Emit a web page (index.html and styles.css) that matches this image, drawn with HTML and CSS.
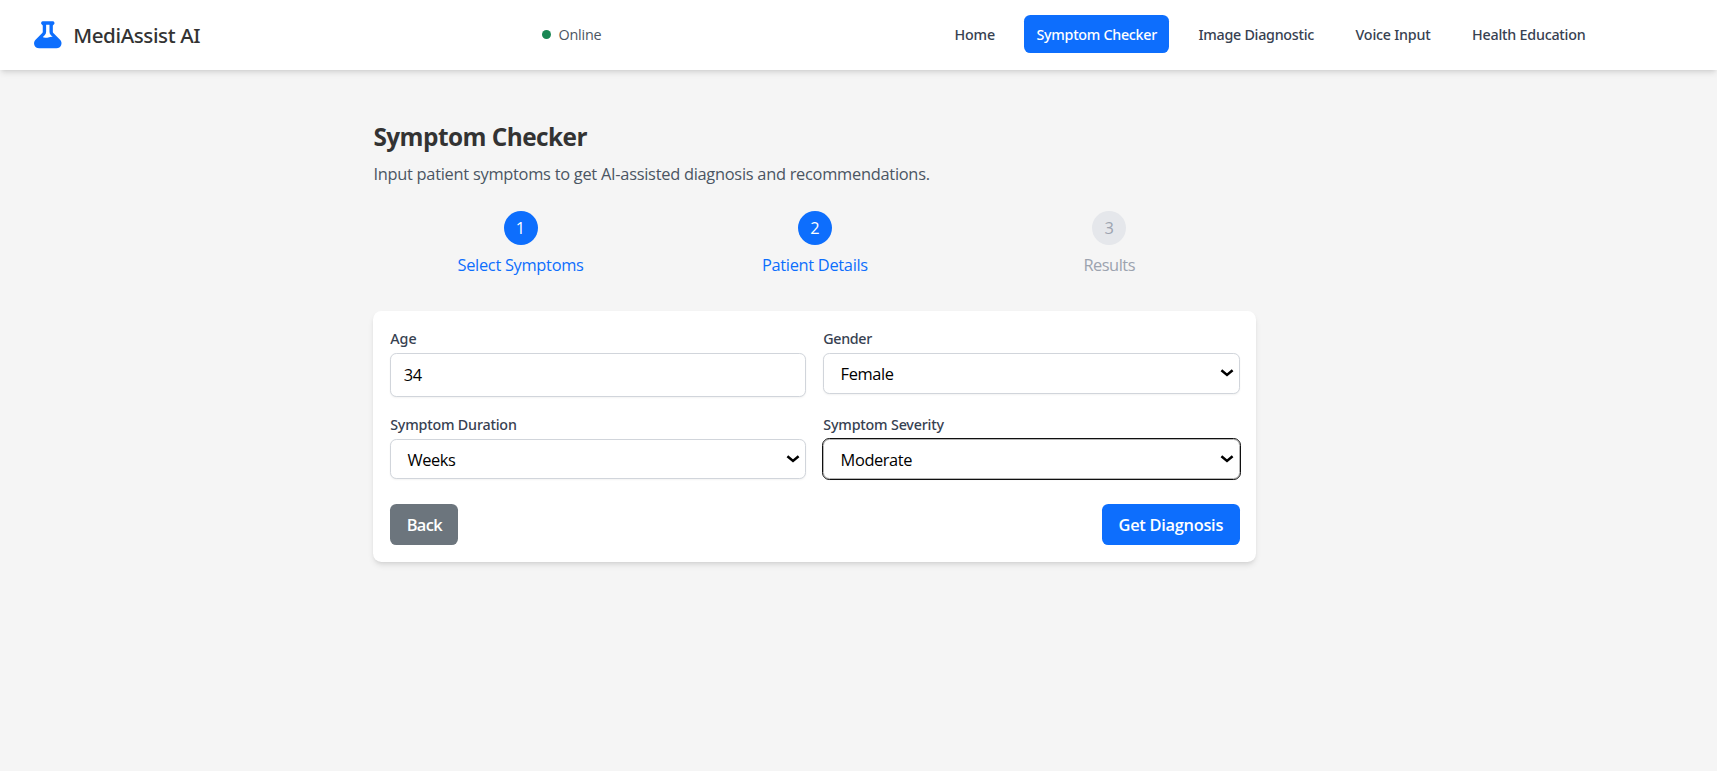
FILE: index.html
```html
<!DOCTYPE html>
<html lang="en">
<head>
<meta charset="utf-8">
<title>MediAssist AI - Symptom Checker</title>
<link rel="stylesheet" href="styles.css">
</head>
<body>
<header class="topbar">
  <div class="brand">
    <svg class="brand-icon" viewBox="0 0 20 20" fill="currentColor"><path fill-rule="evenodd" clip-rule="evenodd" d="M7 2a1 1 0 00-.707 1.707L7 4.414v3.758a1 1 0 01-.293.707l-4 4C.817 14.769 2.156 18 4.828 18h10.343c2.673 0 4.012-3.231 2.122-5.121l-4-4A1 1 0 0113 8.172V4.414l.707-.707A1 1 0 0013 2H7zm2 6.172V4h2v4.172a3 3 0 00.879 2.12l1.027 1.028a4 4 0 00-2.171.102l-.47.156a4 4 0 01-2.53 0l-.563-.187a1.993 1.993 0 00-.114-.035l1.063-1.063A3 3 0 009 8.172z"/></svg>
    <span class="brand-name">MediAssist AI</span>
  </div>
  <div class="status"><span class="status-dot"></span><span class="status-text">Online</span></div>
  <nav class="nav">
    <a class="nav-link home">Home</a>
    <a class="nav-link active">Symptom Checker</a>
    <a class="nav-link image">Image Diagnostic</a>
    <a class="nav-link">Voice Input</a>
    <a class="nav-link">Health Education</a>
  </nav>
</header>
<main class="page">
  <h1 class="title">Symptom Checker</h1>
  <p class="subtitle">Input patient symptoms to get AI-assisted diagnosis and recommendations.</p>
  <div class="steps">
    <div class="step done"><span class="step-number">1</span><span class="step-label">Select Symptoms</span></div>
    <div class="step done"><span class="step-number">2</span><span class="step-label">Patient Details</span></div>
    <div class="step"><span class="step-number">3</span><span class="step-label results">Results</span></div>
  </div>
  <form class="card">
    <div class="fields">
      <div class="field">
        <label class="label age" for="age">Age</label>
        <input class="control" id="age" type="text" value="34">
      </div>
      <div class="field">
        <label class="label gender" for="gender">Gender</label>
        <div class="select">
          <select class="control" id="gender"><option>Female</option></select>
          <svg class="chevron" viewBox="0 0 14 8"><path d="M1.4 1.2 7 5.9l5.6-4.7"/></svg>
        </div>
      </div>
      <div class="field">
        <label class="label" for="duration">Symptom Duration</label>
        <div class="select short">
          <select class="control" id="duration"><option>Weeks</option></select>
          <svg class="chevron" viewBox="0 0 14 8"><path d="M1.4 1.2 7 5.9l5.6-4.7"/></svg>
        </div>
      </div>
      <div class="field">
        <label class="label" for="severity">Symptom Severity</label>
        <div class="select short focused">
          <select class="control" id="severity"><option>Moderate</option></select>
          <svg class="chevron" viewBox="0 0 14 8"><path d="M1.4 1.2 7 5.9l5.6-4.7"/></svg>
        </div>
      </div>
    </div>
    <div class="actions">
      <button class="button back" type="button">Back</button>
      <button class="button primary" type="button">Get Diagnosis</button>
    </div>
  </form>
</main>
</body>
</html>
```

FILE: styles.css
```css
* { box-sizing: border-box; }

body {
  margin: 0;
  min-height: 100vh;
  background: #f5f5f5;
  color: #333;
  font-family: "Open Sans", "Noto Sans", sans-serif;
  font-size: 16.4px;
  line-height: 25px;
}

.topbar {
  display: flex;
  align-items: center;
  height: 70px;
  padding: 0 119px 0 31px;
  background: #fff;
  box-shadow: 0 4px 6px -1px rgba(0, 0, 0, .1), 0 2px 4px -2px rgba(0, 0, 0, .1);
}

.brand { display: flex; align-items: center; gap: 8.6px; width: 511px; }
.brand-icon { width: 33.6px; height: 33.6px; color: #0d6efd; }
.brand-name {
  padding-top: 1px;
  font-family: "Noto Sans", sans-serif;
  font-size: 20.6px;
  font-weight: 500;
  letter-spacing: -.4px;
}

.status { display: flex; align-items: center; gap: 7.6px; margin-top: -1px; }
.status-dot { width: 9px; height: 9px; border-radius: 50%; background: #198754; }
.status-text { margin-top: -1px; color: #4b5563; font-size: 14.4px; letter-spacing: -.25px; }

.nav { display: flex; gap: 16.6px; margin: -2px 0 0 auto; }
.nav-link {
  padding: 9px 12.5px 7.4px;
  border-radius: 6.3px;
  color: #374151;
  font-family: "Noto Sans", sans-serif;
  font-size: 14.3px;
  font-weight: 500;
  line-height: 21px;
  letter-spacing: -.23px;
}
.nav-link.active { background: #0d6efd; color: #fff; letter-spacing: -.29px; }
.nav-link.home { letter-spacing: -.2px; }
.nav-link.image { letter-spacing: -.28px; }

.page { width: 883px; margin-left: 373.4px; padding-top: 50px; }
.title { margin: 0 0 7px; font-size: 24.4px; font-weight: 700; line-height: 34px; letter-spacing: -.55px; }
.subtitle { margin: 0 0 25.4px; color: #4b5563; letter-spacing: -.27px; }

.steps { display: grid; grid-template-columns: repeat(3, 1fr); margin-bottom: 34px; }
.step { display: flex; flex-direction: column; align-items: center; gap: 8px; color: #9ca3af; }
.step-number {
  width: 34px;
  height: 34px;
  border-radius: 50%;
  background: #e5e7eb;
  line-height: 34px;
  text-align: center;
}
.step-label { line-height: 24px; letter-spacing: -.3px; }
.step-label.results { letter-spacing: -.5px; }
.step.done { color: #0d6efd; }
.step.done .step-number { background: #0d6efd; color: #fff; }

.card {
  padding: 16.6px 16.8px 17.3px;
  border-radius: 8.4px;
  background: #fff;
  box-shadow: 0 4px 6px -1px rgba(0, 0, 0, .1), 0 2px 4px -2px rgba(0, 0, 0, .1);
}
.fields { display: grid; grid-template-columns: 1fr 1fr; gap: 16.8px; }
.label {
  display: block;
  margin-bottom: 4px;
  color: #374151;
  font-family: "Noto Sans", sans-serif;
  font-size: 14.3px;
  font-weight: 500;
  line-height: 21px;
  letter-spacing: -.2px;
}
.label.age { letter-spacing: 0; }
.label.gender { letter-spacing: -.35px; }

.control {
  display: block;
  width: 100%;
  height: 44.3px;
  margin: 0;
  padding: 0 12.6px 2px;
  border: 1px solid #d1d5db;
  border-radius: 6.3px;
  outline: 0;
  appearance: none;
  background: #fff;
  box-shadow: 0 1px 2px rgba(0, 0, 0, .05);
  color: #000;
  font: 400 16.4px "Open Sans", "Noto Sans", sans-serif;
  letter-spacing: -.4px;
}
.select { position: relative; }
.select .control { height: 41px; padding: 0 16.3px; }
.select.short .control { height: 40px; }
.select.focused .control { outline: 1.5px solid #101010; border-color: #b5b5b5; }
.chevron {
  position: absolute;
  top: 16px;
  right: 6px;
  width: 14px;
  height: 8px;
  fill: none;
  stroke: #000;
  stroke-width: 2.5;
}

.actions { display: flex; justify-content: space-between; margin-top: 25px; }
.button {
  height: 41px;
  padding: 0 16.5px;
  border: 0;
  border-radius: 6.3px;
  color: #fff;
  font: 600 16.4px "Open Sans", "Noto Sans", sans-serif;
}
.button.back { background: #6c757d; letter-spacing: -.65px; }
.button.primary { background: #0d6efd; letter-spacing: -.28px; }
```
